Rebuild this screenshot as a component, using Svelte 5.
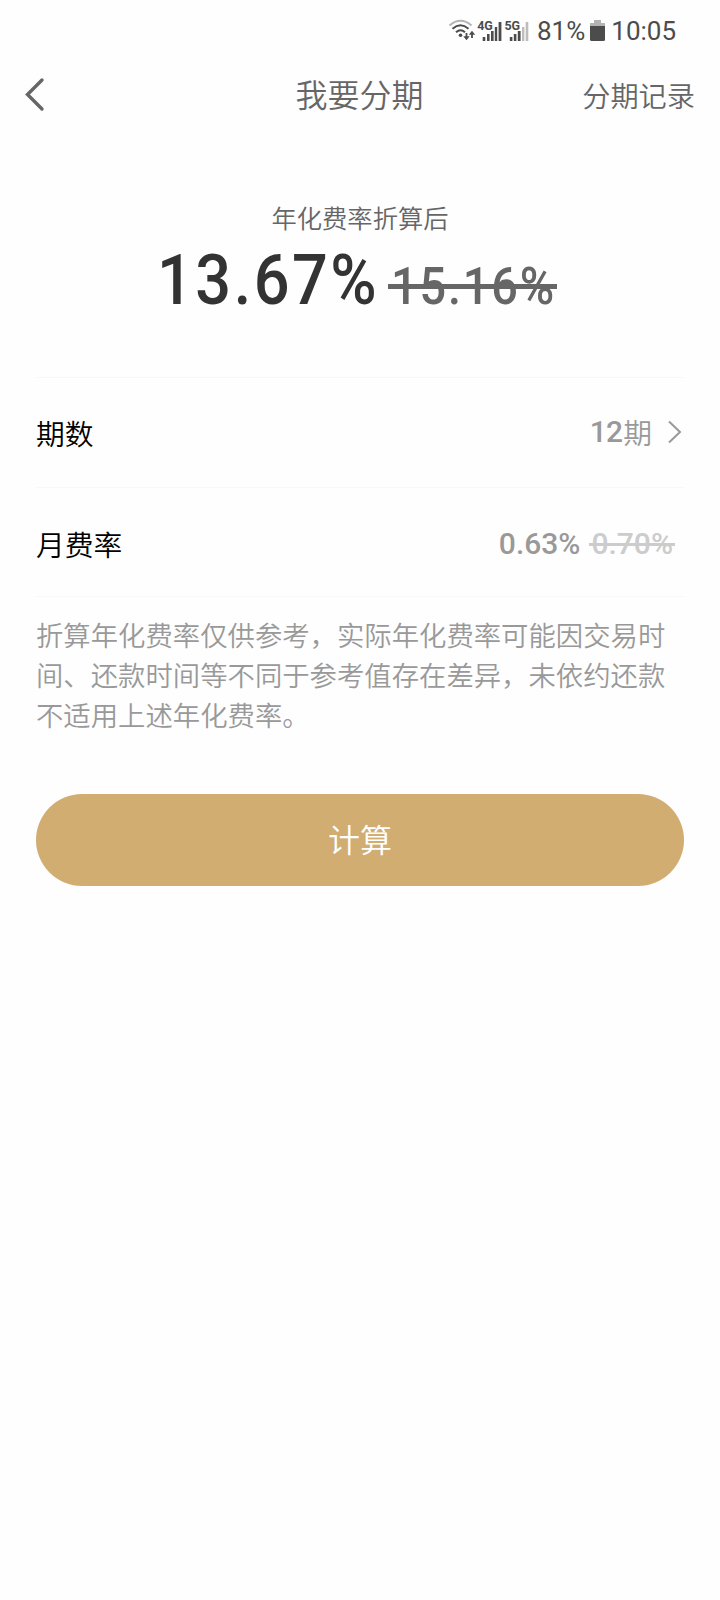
<script lang="ts">
    let rate = "13.67%";
    let originalRate = "15.16%";
    let periods = 12;
    let monthlyRate = "0.63%";
    let originalMonthlyRate = "0.70%";
</script>

<div class="screen">
    <div class="status-bar">
        <svg class="signals" width="84" height="26" viewBox="446 18 84 26">
            <g fill="none" stroke="#4c4c4c" stroke-width="2">
                <path d="M449.5 25.5Q460.5 16 471.5 25.5" stroke="#b4b4b4" />
                <path d="M452.5 28.7Q460.5 21.8 468.5 28.7" />
                <path d="M456 32.2Q460.5 28.2 465 32.2" />
                <path d="M466.5 33V38M472 38V33" stroke-width="1.8" />
            </g>
            <g fill="#4c4c4c">
                <circle cx="460.5" cy="35.2" r="1.8" />
                <path d="M463.3 36.2h6.4l-3.2 4zM468.8 34.8h6.4l-3.2-4z" />
                <text x="477.2" y="29.5">4G</text>
                <rect x="482.7" y="37" width="2.6" height="4" />
                <rect x="487" y="34" width="2.6" height="7" />
                <rect x="491" y="31" width="2.6" height="10" />
                <rect x="494.8" y="27" width="2.4" height="14" />
                <rect x="498.6" y="22" width="2.8" height="19" />
                <text x="504.4" y="29.5">5G</text>
                <rect x="509.8" y="37" width="2.6" height="4" />
                <rect x="513.8" y="34" width="2.6" height="7" />
                <rect x="517.8" y="31" width="2.8" height="10" />
            </g>
            <g fill="#bdbdbd">
                <rect x="522" y="27" width="2.4" height="14" />
                <rect x="525.7" y="22" width="2.6" height="19" />
            </g>
        </svg>
        <span class="battery-text">81%</span>
        <svg class="battery" width="15" height="22" viewBox="0 0 15 22">
            <path d="M4 0h7v3h4v4H0V3h4z" fill="#b4b4b4" />
            <path d="M0 6h15v13.5q0 1.5-1.5 1.5h-12q-1.5 0-1.5-1.5z" fill="#4c4c4c" />
        </svg>
        <span class="time">10:05</span>
    </div>

    <header>
        <button class="back" aria-label="返回">
            <svg width="22" height="36" viewBox="0 0 22 36">
                <path d="M18 3L3.5 17.5 18 32" fill="none" stroke="#666" stroke-width="3.4" stroke-linecap="round" />
            </svg>
        </button>
        <h1>我要分期</h1>
        <button class="records">分期记录</button>
    </header>

    <section class="summary">
        <p>年化费率折算后</p>
        <div class="rates">
            <strong><span class="num">{rate}</span></strong>
            <span class="strike"><span class="num">{originalRate}</span></span>
        </div>
    </section>

    <main>
        <div class="row">
            <span>期数</span>
            <div class="value periods">
                <b>{periods}</b>期
                <svg width="16" height="26" viewBox="0 0 16 26">
                    <path d="M2 2.5L13 13 2 23.5" fill="none" stroke="#999" stroke-width="2" />
                </svg>
            </div>
        </div>
        <div class="row last">
            <span>月费率</span>
            <div class="value monthly">
                <b>{monthlyRate}</b>
                <span class="strike">{originalMonthlyRate}</span>
            </div>
        </div>
        <p class="note">折算年化费率仅供参考，实际年化费率可能因交易时间、还款时间等不同于参考值存在差异，未依约还款不适用上述年化费率。</p>
        <button class="submit">计算</button>
    </main>
</div>

<style>
    :global(body) {
        background: #fefefe;
    }
    .screen {
        height: 1600px;
        font-family: "Noto Sans CJK SC DemiLight", "Noto Sans CJK SC", sans-serif;
        font-weight: 350;
        color: #666;
    }
    button {
        border: 0;
        padding: 0;
        background: none;
        font: inherit;
        color: inherit;
    }
    h1,
    p {
        margin: 0;
        font-weight: inherit;
    }
    .status-bar {
        display: flex;
        align-items: center;
        height: 62px;
        padding-left: 446px;
        font-family: Roboto, sans-serif;
        font-weight: 400;
        font-size: 26px;
        color: #4c4c4c;
    }
    .signals text {
        font: bold 12.5px Roboto, sans-serif;
    }
    .battery-text {
        margin-left: 7px;
    }
    .battery {
        margin: 0 4px 0 5px;
    }
    .time {
        margin-left: 2px;
    }
    header {
        display: grid;
        grid-template-columns: 1fr auto 1fr;
        align-items: center;
        height: 66px;
        padding: 0 25px 0 24px;
    }
    .back {
        display: flex;
    }
    h1 {
        padding-bottom: 4px;
        font-size: 32px;
    }
    .records {
        justify-self: end;
        padding-bottom: 2px;
        font-size: 28.2px;
    }
    .summary {
        height: 249px;
        padding-top: 71px;
        box-sizing: border-box;
    }
    .summary p {
        font-size: 25.3px;
        line-height: 36px;
        text-align: center;
    }
    .rates {
        display: flex;
        align-items: baseline;
        gap: 10px;
        padding-left: 157px;
        font-family: Roboto, sans-serif;
        line-height: 90px;
        white-space: nowrap;
    }
    /* squeezed to a narrow DIN-like face */
    .num {
        display: inline-block;
        transform: scaleX(0.9);
        transform-origin: left;
    }
    .rates strong {
        width: 221px;
        font-size: 70px;
        font-weight: 500;
        letter-spacing: 2.8px;
        color: #333;
    }
    .strike {
        position: relative;
    }
    .strike::after {
        content: "";
        position: absolute;
        left: 0;
        right: 0;
        top: 50%;
        height: 3px;
        background: currentColor;
    }
    .rates .strike {
        width: 166px;
        padding-left: 3px;
        font-size: 52px;
        font-weight: 500;
        letter-spacing: 2.1px;
        color: #666;
    }
    .rates .strike::after {
        top: calc(50% - 3px);
        height: 5px;
    }
    main {
        padding: 0 36px;
    }
    .row {
        display: flex;
        justify-content: space-between;
        align-items: center;
        height: 109.5px;
        box-sizing: border-box;
        border-top: 1px solid #f8f8f8;
        padding-top: 1px;
        font-size: 28.8px;
        color: #000;
    }
    .row.last {
        padding-top: 3px;
    }
    .value {
        display: flex;
        align-items: center;
        color: #999;
    }
    .value b,
    .value .strike {
        font-family: Roboto, sans-serif;
        font-weight: 500;
        font-size: 30px;
    }
    .periods {
        padding: 0 1px 2px 0;
    }
    .periods b {
        letter-spacing: -0.8px;
        margin-right: 1px;
    }
    .periods svg {
        margin-left: 15px;
    }
    .monthly {
        gap: 9px;
        padding-right: 9px;
    }
    .monthly .strike {
        padding: 0 2px;
        color: #ccc;
    }
    .note {
        padding-top: 17px;
        border-top: 1px solid #f8f8f8;
        font-size: 27.36px;
        line-height: 40px;
        color: #999;
    }
    .submit {
        width: 100%;
        height: 92px;
        margin-top: 60px;
        padding-bottom: 5px;
        border-radius: 46px;
        background: #d1ad72;
        color: #fff;
        font-size: 32px;
    }
</style>
